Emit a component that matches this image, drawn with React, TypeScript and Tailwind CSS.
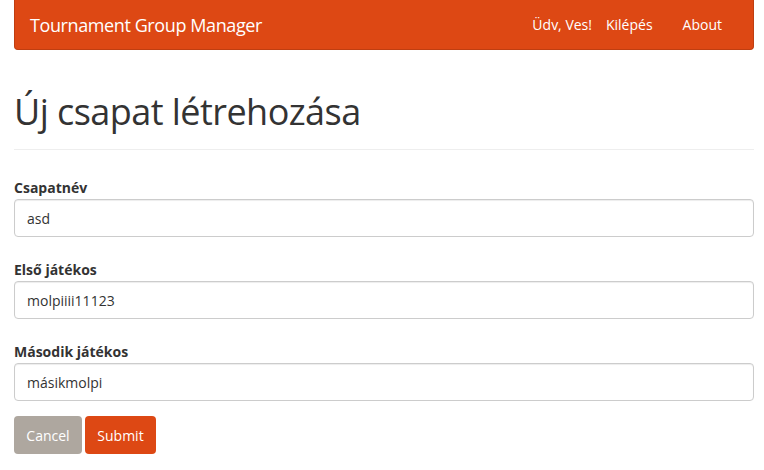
import React from 'react';

const font = { fontFamily: '"Open Sans", "Noto Sans", sans-serif' };

const Field: React.FC<{ label: string; value: string }> = ({ label, value }) => (
  <div className="mb-[23px] flex flex-col">
    <label className="mb-px text-[14px] font-bold leading-[20px] text-[#333]">{label}</label>
    <input
      readOnly
      value={value}
      className="h-[38px] w-full rounded-[4px] border border-[#ccc] bg-white px-[12px] text-[14px] text-[#333] shadow-[inset_0_1px_1px_rgba(0,0,0,0.075)] outline-none"
    />
  </div>
);

export default function App() {
  return (
    <div className="min-h-[470px] bg-white pl-[14px] pr-[10px]" style={font}>
      <nav className="flex h-[50px] items-center justify-between rounded-b-[4px] border border-t-0 border-[#bf3e11] bg-[#dd4814] pl-[15px] pr-[15px] text-white">
        <span className="text-[18px] leading-[20px] tracking-[-0.4px]">Tournament Group Manager</span>
        <div className="flex items-center text-[14px] font-medium leading-[20px]">
          <span className="mr-[14px]">Üdv, Ves!</span>
          <span className="mr-[30px]">Kilépés</span>
          <span className="mr-[16px]">About</span>
        </div>
      </nav>

      <div className="mb-[28px] border-b border-[#eee] pb-[17px] pt-[42px]">
        <h1 className="text-[36px] font-normal leading-[40px] tracking-[-0.55px] text-[#333]">Új csapat létrehozása</h1>
      </div>

      <Field label="Csapatnév" value="asd" />
      <Field label="Első játékos" value="molpiiii11123" />
      <Field label="Második játékos" value="másikmolpi" />

      <div className="-mt-[8px] flex gap-[3px]">
        <button className="h-[38px] w-[68px] rounded-[4px] bg-[#aea79f] text-[14px] font-medium text-white">Cancel</button>
        <button className="h-[38px] w-[71px] rounded-[4px] bg-[#dd4814] text-[14px] font-medium text-white">Submit</button>
      </div>
    </div>
  );
}
